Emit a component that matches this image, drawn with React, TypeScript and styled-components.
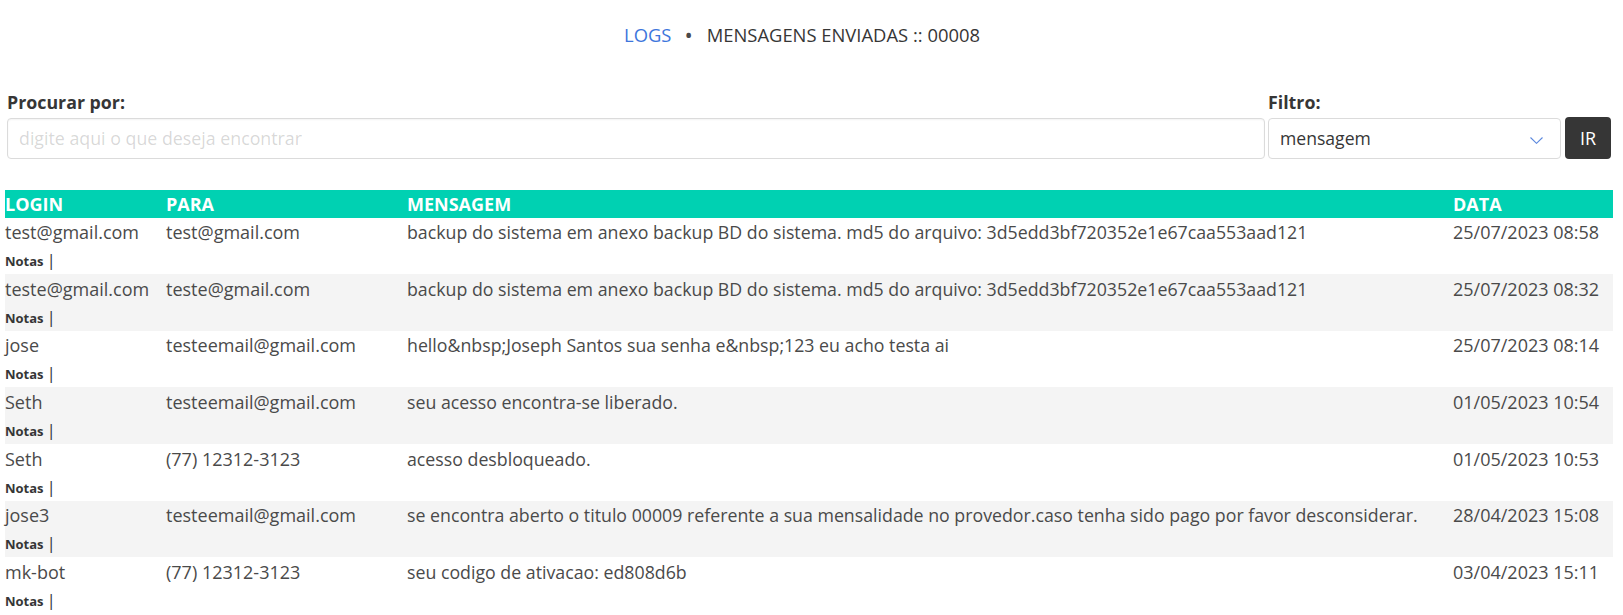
import React from "react";
import styled, { createGlobalStyle } from "styled-components";

const GlobalStyle = createGlobalStyle`
  html, body {
    margin: 0;
    padding: 0;
    background: #ffffff;
  }
  body {
    font-family: "Open Sans", "Noto Sans", Arial, sans-serif;
    font-size: 18px;
    color: #4a4a4a;
  }
  * { box-sizing: border-box; }
`;

const Page = styled.div`
  padding: 20.5px 10px 0 5px;
`;

const Breadcrumb = styled.nav`
  display: flex;
  justify-content: center;
  align-items: center;
  height: 27px;
  line-height: 27px;
  font-size: 18.4px;
  padding-right: 14px;
`;

const Crumb = styled.span<{ $active?: boolean }>`
  color: ${(p) => (p.$active ? "#363636" : "#3d76dc")};
`;

const Bullet = styled.span`
  color: #4a4a4a;
  padding: 0 14px 0 13px;
  font-size: 22px;
  line-height: 27px;
`;

const SearchForm = styled.form`
  display: flex;
  align-items: flex-end;
  margin-top: 41px;
  padding: 0 2px;
  gap: 3px;
`;

const Field = styled.div<{ $grow?: boolean; $width?: number }>`
  display: flex;
  flex-direction: column;
  flex: ${(p) => (p.$grow ? "1 1 auto" : `0 0 ${p.$width}px`)};
`;

const Label = styled.label`
  font-weight: 700;
  color: #363636;
  font-size: 17.8px;
  line-height: 27px;
  margin-bottom: 2.2px;
`;

const TextInput = styled.input`
  height: 41px;
  width: 100%;
  border: 1px solid #dbdbdb;
  border-radius: 4px;
  box-shadow: inset 0 1px 2px rgba(10, 10, 10, 0.05);
  padding: 0 11px;
  font-family: inherit;
  font-size: 17.8px;
  color: #363636;
  outline: none;
  &::placeholder {
    color: rgba(54, 54, 54, 0.2);
  }
`;

const SelectBox = styled.div`
  position: relative;
  height: 41px;
  border: 1px solid #dbdbdb;
  border-radius: 4px;
  display: flex;
  align-items: center;
  padding: 0 11px;
  font-size: 17.6px;
  color: #363636;
`;

const Chevron = styled.svg`
  position: absolute;
  right: 17px;
  top: 18px;
`;

const GoButton = styled.button`
  flex: 0 0 46px;
  height: 42.6px;
  margin-left: 1px;
  margin-bottom: -0.6px;
  background: #363636;
  color: #ffffff;
  border: none;
  border-radius: 4px;
  font-family: inherit;
  font-size: 18px;
  padding: 0;
`;

const Table = styled.table`
  width: 100%;
  margin-top: 31px;
  border-collapse: collapse;
  table-layout: fixed;
`;

const HeadCell = styled.th`
  background: #00d1b2;
  color: #ffffff;
  font-weight: 700;
  font-size: 18px;
  line-height: 27px;
  text-align: left;
  padding: 1px 0 0;
  white-space: nowrap;
`;

const Row = styled.tr<{ $striped: boolean }>`
  background: ${(p) => (p.$striped ? "#f4f4f4" : "#ffffff")};
`;

const Cell = styled.td<{ $size?: number }>`
  vertical-align: top;
  padding: 1.6px 0 1px;
  font-size: ${(p) => p.$size ?? 18}px;
  line-height: 27px;
  white-space: nowrap;
  color: #4a4a4a;
`;

const Line = styled.div`
  height: 27px;
`;

const Notes = styled.strong`
  font-size: 13px;
  font-weight: 700;
  color: #363636;
`;

const Pipe = styled.span`
  color: #363636;
  font-size: 17px;
  margin-left: 3px;
`;

type Log = { login: string; para: string; msg: string; data: string };

const logs: Log[] = [
  {
    login: "test@gmail.com",
    para: "test@gmail.com",
    msg: "backup do sistema em anexo backup BD do sistema. md5 do arquivo: 3d5edd3bf720352e1e67caa553aad121",
    data: "25/07/2023 08:58",
  },
  {
    login: "teste@gmail.com",
    para: "teste@gmail.com",
    msg: "backup do sistema em anexo backup BD do sistema. md5 do arquivo: 3d5edd3bf720352e1e67caa553aad121",
    data: "25/07/2023 08:32",
  },
  {
    login: "jose",
    para: "testeemail@gmail.com",
    msg: "hello&nbsp;Joseph Santos sua senha e&nbsp;123 eu acho testa ai",
    data: "25/07/2023 08:14",
  },
  {
    login: "Seth",
    para: "testeemail@gmail.com",
    msg: "seu acesso encontra-se liberado.",
    data: "01/05/2023 10:54",
  },
  {
    login: "Seth",
    para: "(77) 12312-3123",
    msg: "acesso desbloqueado.",
    data: "01/05/2023 10:53",
  },
  {
    login: "jose3",
    para: "testeemail@gmail.com",
    msg: "se encontra aberto o titulo 00009 referente a sua mensalidade no provedor.caso tenha sido pago por favor desconsiderar.",
    data: "28/04/2023 15:08",
  },
  {
    login: "mk-bot",
    para: "(77) 12312-3123",
    msg: "seu codigo de ativacao: ed808d6b",
    data: "03/04/2023 15:11",
  },
];

export default function App() {
  return (
    <>
      <GlobalStyle />
      <Page>
        <Breadcrumb>
          <Crumb>LOGS</Crumb>
          <Bullet>•</Bullet>
          <Crumb $active>MENSAGENS ENVIADAS :: 00008</Crumb>
        </Breadcrumb>

        <SearchForm onSubmit={(e) => e.preventDefault()}>
          <Field $grow>
            <Label>Procurar por:</Label>
            <TextInput placeholder="digite aqui o que deseja encontrar" />
          </Field>
          <Field $width={293}>
            <Label>Filtro:</Label>
            <SelectBox>
              mensagem
              <Chevron width="13" height="7" viewBox="0 0 13 7">
                <polyline
                  points="0.5,0.5 6.5,6.3 12.5,0.5"
                  fill="none"
                  stroke="#5b88de"
                  strokeWidth="1.1"
                />
              </Chevron>
            </SelectBox>
          </Field>
          <GoButton type="submit">IR</GoButton>
        </SearchForm>

        <Table>
          <colgroup>
            <col style={{ width: 161 }} />
            <col style={{ width: 241 }} />
            <col style={{ width: 1046 }} />
            <col />
          </colgroup>
          <thead>
            <tr>
              <HeadCell>LOGIN</HeadCell>
              <HeadCell>PARA</HeadCell>
              <HeadCell>MENSAGEM</HeadCell>
              <HeadCell>DATA</HeadCell>
            </tr>
          </thead>
          <tbody>
            {logs.map((l, i) => (
              <Row key={i} $striped={i % 2 === 1}>
                <Cell>
                  <Line>{l.login}</Line>
                  <Line>
                    <Notes>Notas</Notes>
                    <Pipe>|</Pipe>
                  </Line>
                </Cell>
                <Cell>{l.para}</Cell>
                <Cell $size={17.75}>{l.msg}</Cell>
                <Cell>{l.data}</Cell>
              </Row>
            ))}
          </tbody>
        </Table>
      </Page>
    </>
  );
}
